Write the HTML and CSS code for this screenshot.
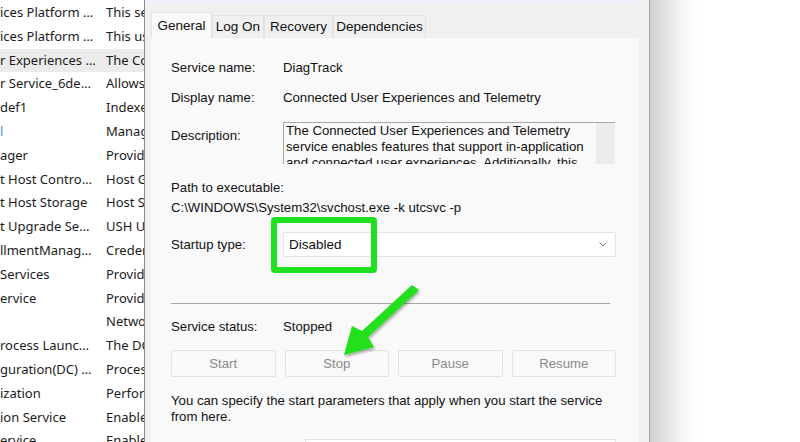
FILE: index.html
```html
<!DOCTYPE html>
<html lang="en">
<head>
    <meta charset="UTF-8">
    <title>DiagTrack Properties</title>
    <link rel="stylesheet" href="styles.css">
</head>
<body>

    <div class="screen">
        <!-- services list behind the dialog -->
        <div class="list">
            <div class="list-row"><span class="name">ices Platform …</span><span class="desc">This service is used for Connected Devices</span></div>
            <div class="list-row"><span class="name">ices Platform …</span><span class="desc">This user service is used for Connected</span></div>
            <div class="list-row selected"><span class="name">r Experiences …</span><span class="desc">The Connected User Experiences</span></div>
            <div class="list-row"><span class="name">r Service_6de…</span><span class="desc">Allows ConsentUX to setup Wi-Fi</span></div>
            <div class="list-row"><span class="name">def1</span><span class="desc">Indexes contact data for fast</span></div>
            <div class="list-row"><span class="name"><span class="blue">l</span></span><span class="desc">Manages communication</span></div>
            <div class="list-row"><span class="name">ager</span><span class="desc">Provides secure storage</span></div>
            <div class="list-row"><span class="name">t Host Contro…</span><span class="desc">Host Guardian Service</span></div>
            <div class="list-row"><span class="name">t Host Storage</span><span class="desc">Host Storage Service</span></div>
            <div class="list-row"><span class="name">t Upgrade Se…</span><span class="desc">USH Upgrade Service</span></div>
            <div class="list-row"><span class="name">llmentManag…</span><span class="desc">Credential Enrollment</span></div>
            <div class="list-row"><span class="name">Services</span><span class="desc">Provides cryptographic</span></div>
            <div class="list-row"><span class="name">ervice</span><span class="desc">Provides data brokering</span></div>
            <div class="list-row"><span class="name"></span><span class="desc">Network data usage</span></div>
            <div class="list-row"><span class="name">rocess Launc…</span><span class="desc">The DCOMLAUNCH service</span></div>
            <div class="list-row"><span class="name">guration(DC) …</span><span class="desc">Processes configuration</span></div>
            <div class="list-row"><span class="name">ization</span><span class="desc">Performs content delivery</span></div>
            <div class="list-row"><span class="name">ion Service</span><span class="desc">Enables pairing</span></div>
            <div class="list-row"><span class="name">ervice</span><span class="desc">Enables the detection</span></div>
        </div>

        <!-- properties dialog -->
        <div class="dialog">
            <div class="titlebar"></div>
            <div class="tabs">
                <div class="tab active">General</div>
                <div class="tab tab-logon">Log On</div>
                <div class="tab tab-recovery">Recovery</div>
                <div class="tab tab-deps">Dependencies</div>
            </div>
            <div class="panel">
                <div class="row">
                    <span class="label">Service name:</span>
                    <span class="value">DiagTrack</span>
                </div>
                <div class="row row-display">
                    <span class="label">Display name:</span>
                    <span class="value">Connected User Experiences and Telemetry</span>
                </div>
                <div class="row row-desc">
                    <span class="label label-desc">Description:</span>
                    <div class="desc-box">
                        <div class="desc-text">The Connected User Experiences and Telemetry service enables features that support in-application and connected user experiences. Additionally, this service manages the event driven collection and transmission of diagnostic and usage information.</div>
                        <div class="desc-scroll"></div>
                    </div>
                </div>
                <div class="path-label">Path to executable:</div>
                <div class="path">C:\WINDOWS\System32\svchost.exe -k utcsvc -p</div>
                <div class="row row-startup">
                    <span class="label">Startup type:</span>
                    <div class="select">
                        <span>Disabled</span>
                        <svg class="chevron" width="8" height="5" viewBox="0 0 8 5"><path d="M0.5 0.5 L4 4 L7.5 0.5" fill="none" stroke="#777" stroke-width="1"/></svg>
                    </div>
                </div>
                <div class="divider"></div>
                <div class="row row-status">
                    <span class="label">Service status:</span>
                    <span class="value">Stopped</span>
                </div>
                <div class="buttons">
                    <button type="button" disabled>Start</button>
                    <button type="button" disabled>Stop</button>
                    <button type="button" disabled>Pause</button>
                    <button type="button" disabled>Resume</button>
                </div>
                <p class="hint">You can specify the start parameters that apply when you start the service from here.</p>
                <div class="params">
                    <span class="label"></span>
                    <div class="params-input"></div>
                </div>
            </div>
        </div>
        <div class="shade"></div>

        <!-- green annotations -->
        <div class="highlight-box"></div>
        <svg class="arrow" width="800" height="442" viewBox="0 0 800 442">
            <defs>
                <filter id="sh" x="-20%" y="-20%" width="140%" height="140%">
                    <feDropShadow dx="1" dy="2" stdDeviation="1.5" flood-color="#000" flood-opacity="0.35"/>
                </filter>
            </defs>
            <polygon points="412,285 419,290 368,337 374,347 344,355 352,326 362,331" fill="#22e01a" filter="url(#sh)"/>
        </svg>
    </div>

</body>
</html>
```

FILE: styles.css
```css
body {
    margin: 0;
    background-color: #ffffff;
    overflow: hidden;
}
.screen {
    position: relative;
    display: flex;
    width: 800px;
    height: 442px;
    overflow: hidden;
}
.list {
    width: 144px;
    flex-shrink: 0;
    padding-top: 1px;
    overflow: hidden;
    font-family: "Noto Sans", sans-serif;
    font-size: 13px;
    color: #1b1b1b;
}
.list-row {
    display: flex;
    height: 23.8px;
    line-height: 23.8px;
    white-space: nowrap;
}
.list-row.selected {
    background-color: #ebebeb;
}
.list-row .name {
    width: 106px;
    flex-shrink: 0;
    overflow: hidden;
}
.list-row .desc {
    overflow: hidden;
}
.blue {
    color: #4a90d9;
}
.dialog {
    width: 504px;
    flex-shrink: 0;
    border-left: 1px solid #8c8c8c;
    border-right: 1px solid #a3a3a3;
    background-color: #f0f0f0;
    font-family: "Liberation Sans", Arial, sans-serif;
    font-size: 13.2px;
    color: #111;
}
.shade {
    width: 50px;
    flex-shrink: 0;
    background: linear-gradient(to right, #cfcfcf, #f4f4f4 60%, #ffffff);
}
.titlebar {
    height: 4px;
    background-color: #eef2f7;
}
.tabs {
    display: flex;
    align-items: flex-end;
    height: 34px;
    padding-left: 6px;
    font-size: 13.5px;
}
.tab {
    height: 23px;
    line-height: 22px;
    text-align: center;
    white-space: nowrap;
    background-color: #f0f0f0;
    border: 1px solid #e2e2e2;
    border-bottom: none;
    box-sizing: border-box;
}
.tab.active {
    width: 61px;
    height: 26px;
    line-height: 25px;
    background-color: #f9f9f9;
    border-color: #e4e4e4;
}
.tab-logon {
    width: 52px;
}
.tab-recovery {
    width: 69px;
}
.tab-deps {
    width: 93px;
}
.panel {
    width: 488px;
    height: 404px;
    margin-left: 6px;
    padding: 22px 23px 0 20px;
    box-sizing: border-box;
    background-color: #f9f9f9;
}
.row {
    display: flex;
    align-items: center;
    line-height: 16px;
}
.label {
    width: 112px;
    flex-shrink: 0;
}
.row-display {
    margin-top: 14px;
}
.row-desc {
    margin-top: 16px;
    align-items: flex-start;
}
.label-desc {
    padding-top: 6px;
}
.desc-box {
    display: flex;
    width: 332px;
    height: 42px;
    border-top: 1px solid #a8a8a8;
    border-left: 1px solid #a8a8a8;
    box-sizing: border-box;
    overflow: hidden;
}
.desc-text {
    flex: 1;
    padding: 0 4px 0 2px;
    line-height: 16px;
}
.desc-scroll {
    width: 19px;
    background-color: #ececec;
}
.path-label {
    margin-top: 16px;
    line-height: 16px;
}
.path {
    margin-top: 4px;
    line-height: 16px;
}
.row-startup {
    margin-top: 16px;
}
.select {
    display: flex;
    justify-content: space-between;
    align-items: center;
    width: 333px;
    height: 25px;
    padding: 0 8px 0 5px;
    box-sizing: border-box;
    background-color: #ffffff;
    border: 1px solid #e3e3e3;
    border-radius: 2px;
    font-size: 13.5px;
}
.divider {
    width: 439px;
    height: 1px;
    margin-top: 46px;
    background-color: #a6a6a6;
}
.row-status {
    margin-top: 15px;
}
.buttons {
    display: flex;
    gap: 9px;
    margin-top: 15px;
}
.buttons button {
    flex: 1;
    height: 27px;
    background-color: #f9f9f9;
    border: 1px solid #e3e3e3;
    border-radius: 2px;
    color: #8a8a8a;
    font-family: "Liberation Sans", Arial, sans-serif;
    font-size: 13.2px;
}
.hint {
    margin: 16px 0 0 0;
    line-height: 16px;
    width: 440px;
}
.params {
    display: flex;
    margin-top: 14px;
}
.params .label {
    width: 134px;
}
.params-input {
    flex: 1;
    height: 24px;
    background-color: #ffffff;
    border: 1px solid #e3e3e3;
}
.highlight-box {
    position: absolute;
    left: 271px;
    top: 217px;
    width: 94px;
    height: 44px;
    border: 6px solid #1fe11f;
    border-radius: 4px;
}
.arrow {
    position: absolute;
    left: 0;
    top: 0;
    pointer-events: none;
}
```
